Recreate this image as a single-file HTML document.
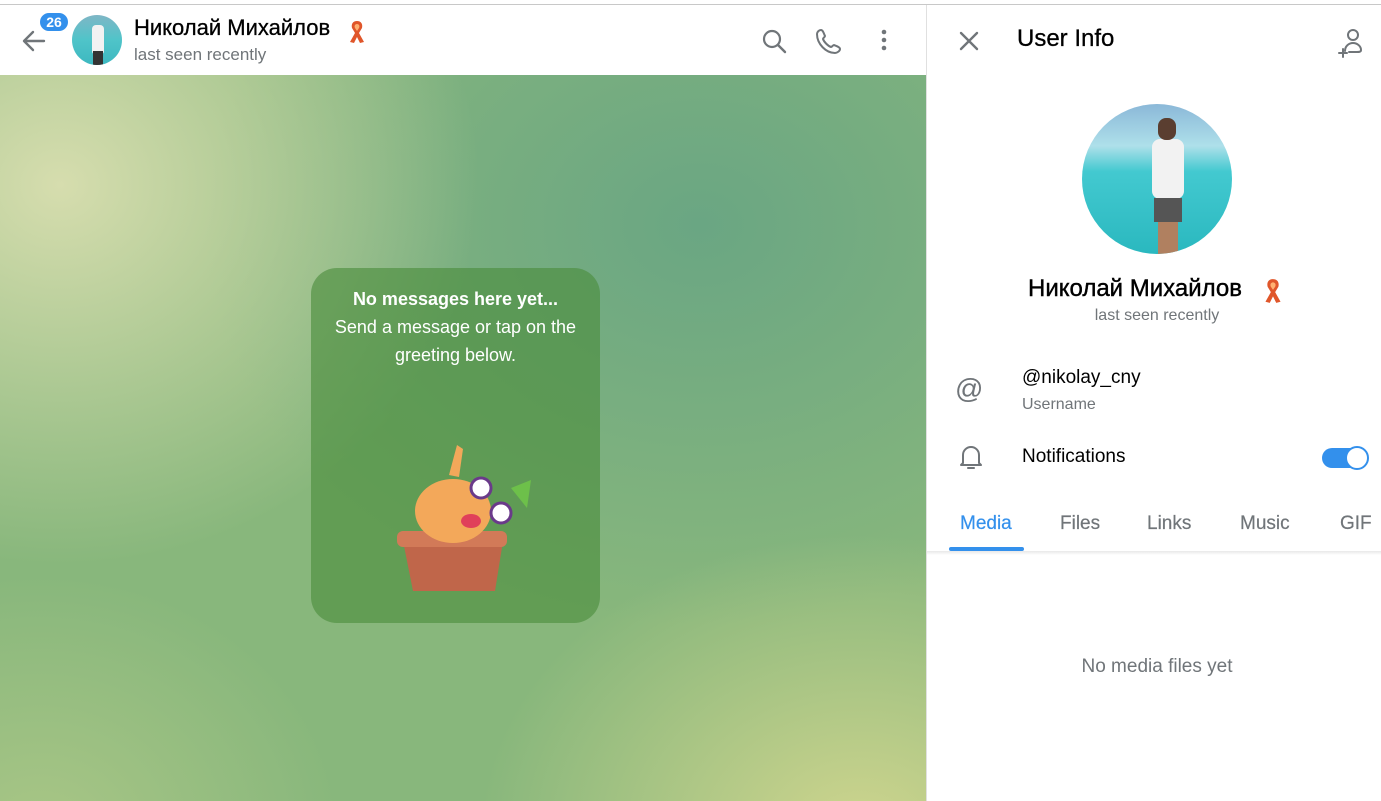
<!DOCTYPE html>
<html><head><meta charset="utf-8"><style>
*{margin:0;padding:0;box-sizing:border-box}
body{width:1381px;height:801px;overflow:hidden;font-family:"Liberation Sans","Noto Sans CJK SC",sans-serif;background:#fff;position:relative}
.topline{position:absolute;left:0;top:0;width:1381px;height:5px;background:#fff;border-bottom:1px solid #c8c8c8}
.chat{position:absolute;left:0;top:5px;width:926px;height:796px}
.hdr{position:absolute;left:0;top:0;width:926px;height:70px;background:#fff}
.bg{position:absolute;left:0;top:70px;width:926px;height:726px;
background:
radial-gradient(ellipse 420px 380px at 60px 110px,#d6ddae 0%,rgba(211,219,170,0) 100%),
radial-gradient(ellipse 380px 300px at 860px 760px,#cfd58e 0%,rgba(207,213,142,0) 100%),
radial-gradient(ellipse 300px 260px at 40px 760px,#a9c686 0%,rgba(169,198,134,0) 100%),
radial-gradient(ellipse 500px 400px at 700px 150px,#6aa683 0%,rgba(106,166,131,0) 100%),
#88b77c}
.box{position:absolute;left:311px;top:263px;width:289px;height:355px;border-radius:26px;background:rgba(74,140,60,0.62);color:#fff;text-align:center;font-size:18px;line-height:28px;padding-top:17px}
.side{position:absolute;left:926px;top:5px;width:455px;height:796px;border-left:1px solid #e0e0e0;background:#fff}
.gray{color:#707579}
</style></head><body>
<div class="topline"></div>
<div class="chat">
 <div class="hdr">
  <svg style="position:absolute;left:20px;top:22px" width="28" height="28" viewBox="0 0 28 28"><path d="M24 14H5M13 5l-9 9 9 9" stroke="#707579" stroke-width="2.4" fill="none" stroke-linecap="round" stroke-linejoin="round"/></svg>
  <div style="position:absolute;left:38px;top:6px;width:32px;height:22px;border-radius:11px;background:#3390ec;color:#fff;font-size:14px;font-weight:bold;text-align:center;line-height:18px;border:2px solid #fff">26</div>
  <div style="position:absolute;left:72px;top:10px;width:50px;height:50px;border-radius:50%;background:linear-gradient(180deg,#7fb6c6 0%,#4fc4c9 50%,#3db8c0 100%);overflow:hidden"><div style="position:absolute;left:20px;top:10px;width:12px;height:30px;background:#f2f2f2;border-radius:4px"></div><div style="position:absolute;left:21px;top:36px;width:10px;height:14px;background:#333"></div></div>
  <div style="position:absolute;left:134px;top:10px;font-size:22px;color:#000;-webkit-text-stroke:0.3px #000">Николай Михайлов</div>
  <svg style="position:absolute;left:348px;top:14px" width="18" height="26" viewBox="0 0 18 26"><path d="M9 2c4 0 6 3 5 7l-3 5 5 9-4 1-3-6-3 6-4-1 5-9-3-5C3 5 5 2 9 2z" fill="#e0562a"/><path d="M9 5c2 0 3 2 2 4L9 12 7 9C6 7 7 5 9 5z" fill="#ffb070"/></svg>
  <div class="gray" style="position:absolute;left:134px;top:40px;font-size:17px">last seen recently</div>
  <svg style="position:absolute;left:760px;top:22px" width="28" height="28" viewBox="0 0 28 28"><circle cx="12" cy="12" r="8" stroke="#707579" stroke-width="2.2" fill="none"/><path d="M18 18l7 7" stroke="#707579" stroke-width="2.4" stroke-linecap="round"/></svg>
  <svg style="position:absolute;left:815px;top:22px" width="28" height="28" viewBox="0 0 28 28"><path d="M6 3c2 0 3 4 4 6 0 1-2 2-2 3 1 3 5 7 8 8 1 0 2-2 3-2 2 1 6 2 6 4 0 2-3 4-5 4C11 26 2 17 2 7c0-2 2-4 4-4z" stroke="#707579" stroke-width="2" fill="none" stroke-linejoin="round"/></svg>
  <svg style="position:absolute;left:870px;top:22px" width="28" height="28" viewBox="0 0 28 28"><circle cx="14" cy="5" r="2.3" fill="#707579"/><circle cx="14" cy="13" r="2.3" fill="#707579"/><circle cx="14" cy="21" r="2.3" fill="#707579"/></svg>
 </div>
 <div class="bg">
  <div class="box" style="top:193px">
   <div style="font-weight:bold">No messages here yet...</div>
   <div>Send a message or tap on the<br>greeting below.</div>
   <svg style="position:absolute;left:80px;top:165px" width="160" height="160" viewBox="0 0 160 160">
    <path d="M12 108h100l-8 50H22z" fill="#c0664a"/><rect x="6" y="98" width="110" height="16" rx="6" fill="#d27a58"/>
    <ellipse cx="62" cy="78" rx="38" ry="32" fill="#f3a85a"/>
    <path d="M58 42l8-30 6 4-4 28z" fill="#f3a85a"/>
    <circle cx="90" cy="55" r="10" fill="#fff" stroke="#6a3a8a" stroke-width="3"/><circle cx="110" cy="80" r="10" fill="#fff" stroke="#6a3a8a" stroke-width="3"/>
    <path d="M120 55l20-8-4 28z" fill="#6dc04a"/>
    <ellipse cx="80" cy="88" rx="10" ry="7" fill="#e0405a"/>
   </svg>
  </div>
 </div>
</div>
<div class="side">
 <svg style="position:absolute;left:30px;top:24px" width="24" height="24" viewBox="0 0 24 24"><path d="M4 4l16 16M20 4L4 20" stroke="#707579" stroke-width="2.4" stroke-linecap="round"/></svg>
 <div style="position:absolute;left:90px;top:20px;font-size:24px;color:#000;-webkit-text-stroke:0.3px #000">User Info</div>
 <svg style="position:absolute;left:410px;top:22px" width="28" height="32" viewBox="0 0 28 32"><circle cx="16" cy="8" r="5" stroke="#707579" stroke-width="2" fill="none"/><path d="M8 24c0-5 4-8 8-8s8 3 8 7c0 2-2 2-4 2h-8" stroke="#707579" stroke-width="2" fill="none" stroke-linecap="round"/><path d="M2 26h8M6 22v8" stroke="#707579" stroke-width="2" stroke-linecap="round"/></svg>
 <div style="position:absolute;left:155px;top:99px;width:150px;height:150px;border-radius:50%;overflow:hidden;background:linear-gradient(180deg,#8bb8d8 0%,#aee0ea 28%,#43c9d0 45%,#2ab8bf 100%)"><div style="position:absolute;left:70px;top:35px;width:32px;height:60px;background:#f2f2f2;border-radius:8px"></div><div style="position:absolute;left:76px;top:14px;width:18px;height:22px;background:#5a3e30;border-radius:8px"></div><div style="position:absolute;left:72px;top:94px;width:28px;height:24px;background:#555"></div><div style="position:absolute;left:76px;top:118px;width:20px;height:32px;background:#b08060"></div></div>
 <div style="position:absolute;left:101px;top:270px;font-size:24px;color:#000;-webkit-text-stroke:0.4px #000">Николай Михайлов</div>
 <svg style="position:absolute;left:336px;top:272px" width="20" height="28" viewBox="0 0 18 26"><path d="M9 2c4 0 6 3 5 7l-3 5 5 9-4 1-3-6-3 6-4-1 5-9-3-5C3 5 5 2 9 2z" fill="#e0562a"/><path d="M9 5c2 0 3 2 2 4L9 12 7 9C6 7 7 5 9 5z" fill="#ffb070"/></svg>
 <div class="gray" style="position:absolute;left:0;width:460px;top:302px;text-align:center;font-size:16px">last seen recently</div>
 <div style="position:absolute;left:28px;top:368px;font-size:28px;color:#707579">@</div>
 <div style="position:absolute;left:95px;top:362px;font-size:19px;color:#000">@nikolay_cny</div>
 <div class="gray" style="position:absolute;left:95px;top:391px;font-size:16px">Username</div>
 <svg style="position:absolute;left:30px;top:437px" width="28" height="30" viewBox="0 0 28 30"><path d="M6 21V13a8 8 0 0116 0v8l2 2H4z" stroke="#707579" stroke-width="2" fill="none" stroke-linejoin="round"/><path d="M11 26h6" stroke="#707579" stroke-width="2" stroke-linecap="round"/></svg>
 <div style="position:absolute;left:95px;top:441px;font-size:19px;color:#000">Notifications</div>
 <div style="position:absolute;left:395px;top:443px;width:45px;height:20px;border-radius:10px;background:#3390ec"></div>
 <div style="position:absolute;left:418px;top:441px;width:24px;height:24px;border-radius:50%;background:#fff;border:2px solid #3390ec"></div>
 <div style="position:absolute;left:0;top:508px;width:455px;font-size:19px;color:#707579;-webkit-text-stroke:0.2px #707579">
  <span style="position:absolute;left:33px;color:#3390ec;-webkit-text-stroke:0.2px #3390ec">Media</span>
  <span style="position:absolute;left:133px">Files</span>
  <span style="position:absolute;left:220px">Links</span>
  <span style="position:absolute;left:313px">Music</span>
  <span style="position:absolute;left:413px">GIF</span>
 </div>
 <div style="position:absolute;left:22px;top:542px;width:75px;height:4px;border-radius:2px;background:#3390ec"></div>
 <div style="position:absolute;left:0;top:546px;width:455px;height:4px;background:linear-gradient(#e8e8e8,#fff)"></div>
 <div class="gray" style="position:absolute;left:0;width:460px;top:651px;text-align:center;font-size:19px">No media files yet</div>
</div>
</body></html>
